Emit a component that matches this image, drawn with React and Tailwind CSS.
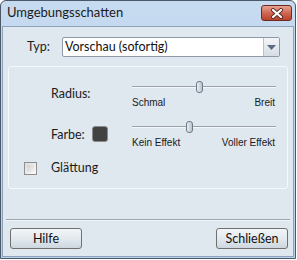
import React from "react";

const F = { fontFamily: 'Lato, "Noto Sans", sans-serif' };
const S = { fontFamily: '"Liberation Sans", Arial, sans-serif' };

function Slider({ pos, left, right }) {
  return (
    <div className="w-[144px] flex flex-col">
      <div className="relative h-[12px]">
        <div className="absolute left-0 right-0 top-[5px] h-[1px] bg-[#9aa3ad]" />
        <div className="absolute left-0 right-0 top-[6px] h-[1px] bg-[#f4f7fa]" />
        <div
          className="absolute top-0 w-[7px] h-[12px] rounded-[3px] border border-[#707a86] bg-gradient-to-r from-[#e9eef3] to-[#b9c3ce]"
          style={{ left: pos }}
        />
      </div>
      <div className="mt-[4px] flex justify-between text-[10px] leading-[12px] text-[#1a1a1a]" style={S}>
        <span>{left}</span>
        <span className="mr-[1px]">{right}</span>
      </div>
    </div>
  );
}

export default function App() {
  return (
    <div className="w-[297px] h-[260px] bg-white" style={F}>
      <div className="w-[296px] h-[259px] border border-[#4a5868] rounded-t-[6px] bg-gradient-to-b from-[#c6daf0] to-[#b9d0ea] flex flex-col">
        {/* title bar */}
        <div className="h-[25px] flex items-start justify-between pl-[6px] pr-[3px]">
          <div className="mt-[3px] text-[13px] leading-[16px] text-[#1b1b1b]">Umgebungsschatten</div>
          <div className="mt-[4px] w-[31px] h-[16px] rounded-[3px] border border-[#6b2a22] bg-gradient-to-b from-[#e6a493] via-[#cf6752] to-[#b8432e] flex items-center justify-center">
            <svg width="14" height="11" viewBox="0 0 14 11">
              <path d="M3 2 L11 9 M11 2 L3 9" stroke="#5a2a22" strokeWidth="4" strokeLinecap="round" />
              <path d="M3 2 L11 9 M11 2 L3 9" stroke="#ffffff" strokeWidth="2.2" strokeLinecap="round" />
            </svg>
          </div>
        </div>
        {/* content */}
        <div className="flex-1 mx-[1px] mb-[1px] border border-[#8ea3bb] bg-[#dfe7ef] flex flex-col">
          <div className="mt-[10px] flex items-center pl-[24px]">
            <span className="w-[35px] text-[12.5px] leading-[16px] text-[#1b1b1b]">Typ:</span>
            <div className="w-[218px] h-[20px] rounded-[2px] border border-[#8e9aa8] bg-white flex items-stretch">
              <div className="flex-1 pl-[2px] text-[12.5px] leading-[18px] text-[#111]">Vorschau (sofortig)</div>
              <div className="w-[16px] border-l border-[#b9c2cc] bg-gradient-to-b from-[#f3f5f8] to-[#d7dde4] flex items-center justify-center">
                <svg width="9" height="5" viewBox="0 0 9 5">
                  <path d="M0 0 L9 0 L4.5 5 Z" fill="#5a6b82" />
                </svg>
              </div>
            </div>
          </div>
          {/* group box */}
          <div className="mt-[9px] ml-[5px] w-[280px] h-[123px] rounded-[3px] border border-[#f6f9fc] pt-[14px] flex flex-col">
            <div className="flex items-start">
              <div className="ml-[42px] w-[81px] mt-[5px] text-[12.5px] leading-[16px] text-[#1b1b1b]">Radius:</div>
              <Slider pos={64} left="Schmal" right="Breit" />
            </div>
            <div className="mt-[12px] flex items-start">
              <div className="ml-[42px] w-[81px] flex items-start">
                <span className="w-[41px] mt-[6px] text-[12.5px] leading-[16px] text-[#1b1b1b]">Farbe:</span>
                <div className="mt-[5px] w-[16px] h-[16px] rounded-[3px] border border-[#8a8a8a] bg-[#424242]" />
              </div>
              <Slider pos={54} left="Kein Effekt" right="Voller Effekt" />
            </div>
            <div className="mt-[11px] ml-[15px] flex items-center">
              <div className="w-[13px] h-[13px] border border-[#8f8f8f] bg-gradient-to-br from-[#dcdcdc] to-[#fbfbfb] p-[2px]">
                <div className="w-full h-full bg-gradient-to-br from-[#d2d2d2] to-[#f2f2f2]" />
              </div>
              <span className="ml-[14px] text-[12.5px] leading-[16px] text-[#1b1b1b]">Glättung</span>
            </div>
          </div>
          {/* separator */}
          <div className="mt-[30px] mx-[3px] h-[1px] bg-[#9ea6ae]" />
          <div className="h-[1px] mx-[3px] bg-[#f3f6f9]" />
          <div className="mt-[7px] flex justify-between pl-[7px] pr-[5px]">
            <button className="w-[72px] h-[21px] rounded-[3px] border border-[#707070] bg-gradient-to-b from-[#f2f5f8] via-[#e3e9ef] to-[#cdd6df] text-[12.5px] leading-[18px] text-[#111]">Hilfe</button>
            <button className="w-[72px] h-[21px] rounded-[3px] border border-[#707070] bg-gradient-to-b from-[#f2f5f8] via-[#e3e9ef] to-[#cdd6df] text-[12.5px] leading-[18px] text-[#111]">Schließen</button>
          </div>
        </div>
      </div>
    </div>
  );
}
